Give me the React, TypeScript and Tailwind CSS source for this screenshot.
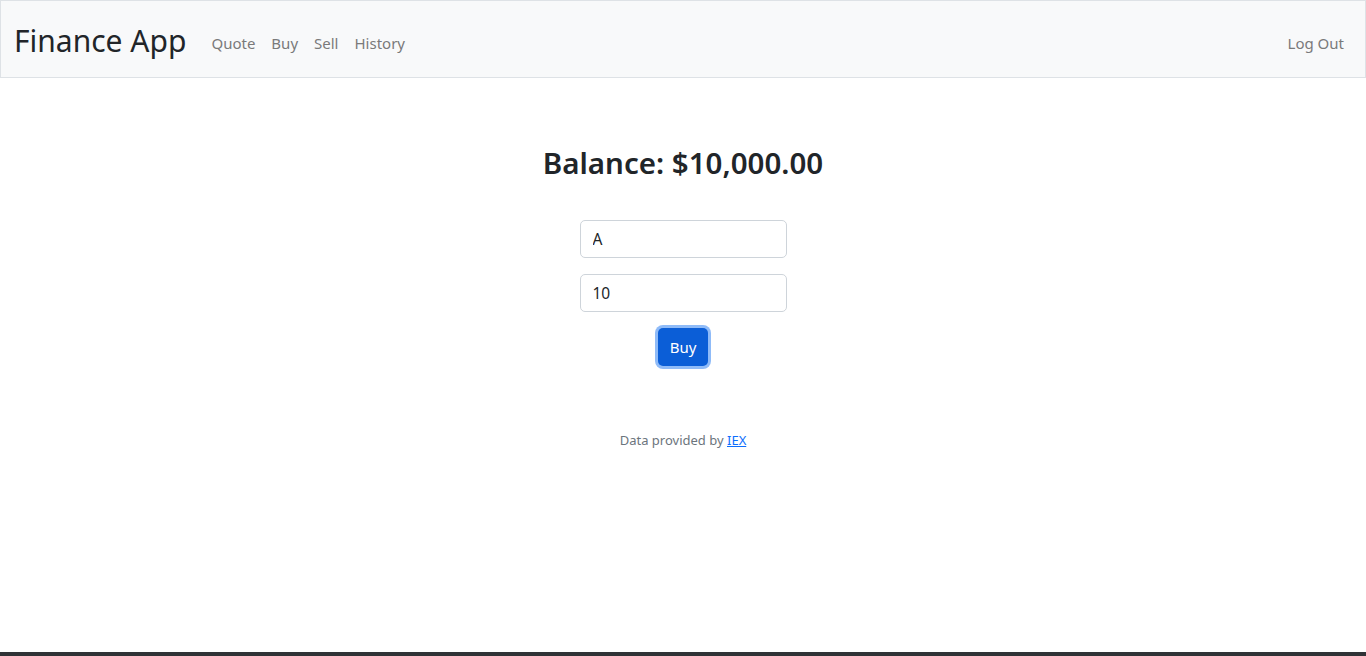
import React from "react";

const font = { fontFamily: '"Noto Sans", "Open Sans", Roboto, sans-serif' };

export const App: React.FC = () => {
  return (
    <div className="h-[656px] flex flex-col bg-white text-[#212529]" style={font}>
      <nav className="h-[78px] shrink-0 border border-[#dee2e6] bg-[#f8f9fa] flex items-center pl-[13px] pr-[13px] pt-[6px]">
        <a className="text-[30px] leading-none text-[#212529] mr-[17px] pb-[2px]">Finance App</a>
        <ul className="flex items-center text-[15px] text-[#7a7a7a] pt-[3px]">
          {["Quote", "Buy", "Sell", "History"].map((item) => (
            <li key={item} className="px-[8px]">
              {item}
            </li>
          ))}
        </ul>
        <div className="ml-auto px-[8px] text-[15px] text-[#7a7a7a] pt-[3px]">Log Out</div>
      </nav>

      <main className="flex-1 flex flex-col items-center pt-[66px]">
        <h2 className="text-[29.5px] leading-[38px] font-semibold mb-[38px]">Balance: $10,000.00</h2>
        <form className="flex flex-col items-center">
          <input
            className="w-[207px] h-[38px] border border-[#ced4da] rounded-[5px] px-[12px] text-[15.5px] mb-[16px] outline-none"
            defaultValue="A"
          />
          <input
            className="w-[207px] h-[38px] border border-[#ced4da] rounded-[5px] px-[12px] text-[15.5px] mb-[16px] outline-none"
            defaultValue="10"
          />
          <button
            type="button"
            className="h-[38px] px-[12px] rounded-[5px] bg-[#0b5ed7] text-white text-[15px] shadow-[0_0_0_3px_#8fbbf8]"
          >
            Buy
          </button>
        </form>
        <p className="mt-[64px] text-[13px] leading-[21px] text-[#6c757d]">
          Data provided by{" "}
          <a className="text-[#0d6efd] underline">IEX</a>
        </p>
      </main>

      <div className="h-[4px] shrink-0 bg-[#2f3236]" />
    </div>
  );
};

export default App;
